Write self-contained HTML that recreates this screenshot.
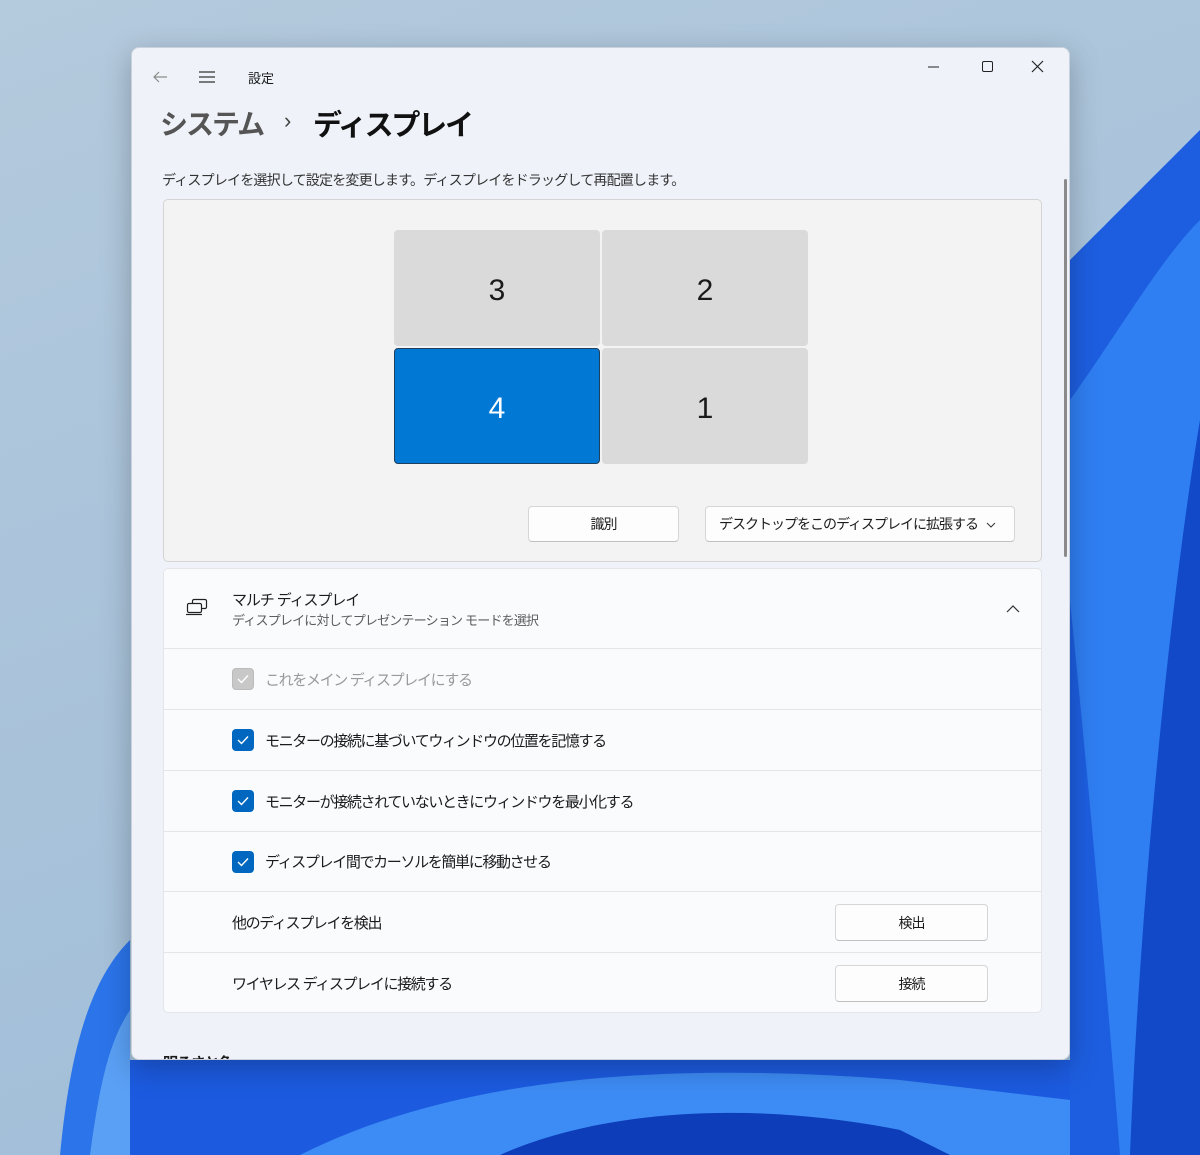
<!DOCTYPE html>
<html><head><meta charset="utf-8"><style>
*{margin:0;padding:0;box-sizing:border-box}
body{width:1200px;height:1155px;overflow:hidden;position:relative;font-family:"Liberation Sans","Noto Sans CJK JP",sans-serif;background:linear-gradient(160deg,#b4cadd 0%,#a8c2da 50%,#9fbcd8 100%)}
.win{position:absolute;left:131px;top:47px;width:939px;height:1013px;background:#eff3f9;border:1px solid #c9d2dc;border-radius:8px;overflow:hidden;box-shadow:0 8px 30px rgba(0,0,0,.25)}
.a{position:absolute}
.t{color:#1b1b1b;font-size:14px;white-space:nowrap;letter-spacing:-1.1px}
.tile{position:absolute;width:206px;height:116px;background:#dadada;border-radius:4px;font-size:30px;display:flex;align-items:center;justify-content:center;color:#1a1a1a;font-family:"Liberation Sans",sans-serif;padding-top:6px}
.btn{position:absolute;background:#fdfdfd;border:1px solid #d6d6d6;border-bottom-color:#c0c0c0;border-radius:4px;font-size:14px;display:flex;align-items:center;justify-content:center;color:#1b1b1b;letter-spacing:-1px}
.row{position:absolute;left:32px;width:877px;height:60px;border-top:1px solid #e5e5e5;display:flex;align-items:center;font-size:15px;color:#1b1b1b;letter-spacing:-1.35px}
.cb{width:22px;height:22px;border-radius:4px;background:#0067c0;margin-left:68px;margin-right:11px;display:flex;align-items:center;justify-content:center}
</style></head><body>
<svg class="a" style="left:0;top:0" width="1200" height="1155">
<path d="M1070 260 C1130 200 1170 160 1200 130 L1200 1155 L1070 1155Z" fill="#1d5ee0"/>
<path d="M1070 400 C1120 330 1160 260 1200 220 L1200 1155 L1120 1155 C1100 900 1080 700 1070 600Z" fill="#2f7ef2"/>
<path d="M1130 1155 C1140 900 1170 600 1200 420 L1200 1155Z" fill="#1149c8"/>
<path d="M60 1155 C70 1050 90 980 130 940 L130 1155Z" fill="#2b74ea"/>
<path d="M90 1155 C100 1080 110 1040 130 1010 L130 1155Z" fill="#5aa0f5"/>
<path d="M130 1060 L1070 1060 L1070 1155 L130 1155Z" fill="#1c5be0"/>
<path d="M300 1155 C450 1080 650 1060 900 1080 L1070 1100 L1070 1155Z" fill="#3d8cf5"/>
<path d="M500 1155 C600 1110 750 1100 900 1130 L950 1155Z" fill="#0d3db8"/>
</svg>
<div class="win">
<svg class="a" style="left:20px;top:22px" width="16" height="14"><path d="M15 7H2M7 2L2 7l5 5" stroke="#8a8a8a" stroke-width="1.2" fill="none"/></svg>
<svg class="a" style="left:66px;top:22px" width="18" height="14"><path d="M1 2h16M1 7h16M1 12h16" stroke="#333" stroke-width="1.3"/></svg>
<div class="a t" style="left:116px;top:20px;font-size:13px;letter-spacing:0">設定</div>
<svg class="a" style="left:795px;top:12px" width="120" height="14"><path d="M1 7h11" stroke="#222"/><rect x="55.5" y="1.5" width="10" height="10" rx="1.5" fill="none" stroke="#222"/><path d="M105 1l11 11M116 1l-11 11" stroke="#222" stroke-width="1.2"/></svg>
<div class="a" style="left:28px;top:55px;font-size:28px;font-weight:bold;color:#555;white-space:nowrap;letter-spacing:-2px">システム</div>
<div class="a" style="left:152px;top:60px;font-size:22px;color:#444">›</div>
<div class="a" style="left:181px;top:54px;font-size:29px;font-weight:bold;color:#111;white-space:nowrap;letter-spacing:-2.2px">ディスプレイ</div>
<div class="a t" style="left:30px;top:122px;color:#333;letter-spacing:-0.8px">ディスプレイを選択して設定を変更します。ディスプレイをドラッグして再配置します。</div>
<div class="a" style="left:31px;top:151px;width:879px;height:363px;background:#f3f3f3;border:1px solid #d4d4d4;border-radius:5px"></div>
<div class="tile" style="left:262px;top:182px">3</div>
<div class="tile" style="left:470px;top:182px">2</div>
<div class="tile" style="left:262px;top:300px;background:#0078d4;border:1px solid #1f3f5f;color:#fff">4</div>
<div class="tile" style="left:470px;top:300px">1</div>
<div class="btn" style="left:396px;top:458px;width:151px;height:36px">識別</div>
<div class="btn" style="left:573px;top:458px;width:310px;height:36px;justify-content:flex-start;padding-left:13px">デスクトップをこのディスプレイに拡張する<svg style="position:absolute;right:18px;top:15px" width="10" height="6"><path d="M1 1l4 4 4-4" stroke="#333" fill="none"/></svg></div>
<div class="a" style="left:31px;top:520px;width:879px;height:445px;background:#fafbfd;border:1px solid #e3e5e8;border-radius:5px"></div>
<svg class="a" style="left:53px;top:550px" width="24" height="18"><rect x="7.5" y="1.5" width="14" height="9" rx="1.5" fill="none" stroke="#222" stroke-width="1.2"/><rect x="2.5" y="5.5" width="14" height="9" rx="1.5" fill="#fafbfd" stroke="#222" stroke-width="1.2"/><path d="M1 16.5h16" stroke="#222" stroke-width="1.2"/></svg>
<div class="a t" style="left:100px;top:541px;font-size:15px">マルチ ディスプレイ</div>
<div class="a t" style="left:100px;top:562px;font-size:13px;color:#5d5d5d;letter-spacing:-0.8px">ディスプレイに対してプレゼンテーション モードを選択</div>
<svg class="a" style="left:874px;top:557px" width="14" height="8"><path d="M1 7l6-6 6 6" stroke="#333" fill="none" stroke-width="1.2"/></svg>
<div class="row" style="top:600px;height:61px"><div class="cb" style="background:#c8c8c8;border:1px solid #bbb"><svg width="12" height="10"><path d="M1 5l3.5 3.5L11 1.5" stroke="#fff" stroke-width="1.4" fill="none"/></svg></div><span style="color:#9a9a9a">これをメイン ディスプレイにする</span></div>
<div class="row" style="top:661px;height:61px"><div class="cb"><svg width="12" height="10"><path d="M1 5l3.5 3.5L11 1.5" stroke="#fff" stroke-width="1.4" fill="none"/></svg></div>モニターの接続に基づいてウィンドウの位置を記憶する</div>
<div class="row" style="top:722px;height:61px"><div class="cb"><svg width="12" height="10"><path d="M1 5l3.5 3.5L11 1.5" stroke="#fff" stroke-width="1.4" fill="none"/></svg></div>モニターが接続されていないときにウィンドウを最小化する</div>
<div class="row" style="top:783px;height:60px"><div class="cb"><svg width="12" height="10"><path d="M1 5l3.5 3.5L11 1.5" stroke="#fff" stroke-width="1.4" fill="none"/></svg></div>ディスプレイ間でカーソルを簡単に移動させる</div>
<div class="row" style="top:843px;height:61px;padding-left:68px">他のディスプレイを検出</div>
<div class="row" style="top:904px;height:61px;padding-left:68px">ワイヤレス ディスプレイに接続する</div>
<div class="btn" style="left:703px;top:856px;width:153px;height:37px">検出</div>
<div class="btn" style="left:703px;top:917px;width:153px;height:37px">接続</div>
<div class="a t" style="left:31px;top:1004px;font-weight:bold;font-size:15px">明るさと色</div>
<div class="a" style="left:932px;top:131px;width:3px;height:378px;background:#8a8a8a;border-radius:2px"></div>
</div>
</body></html>
